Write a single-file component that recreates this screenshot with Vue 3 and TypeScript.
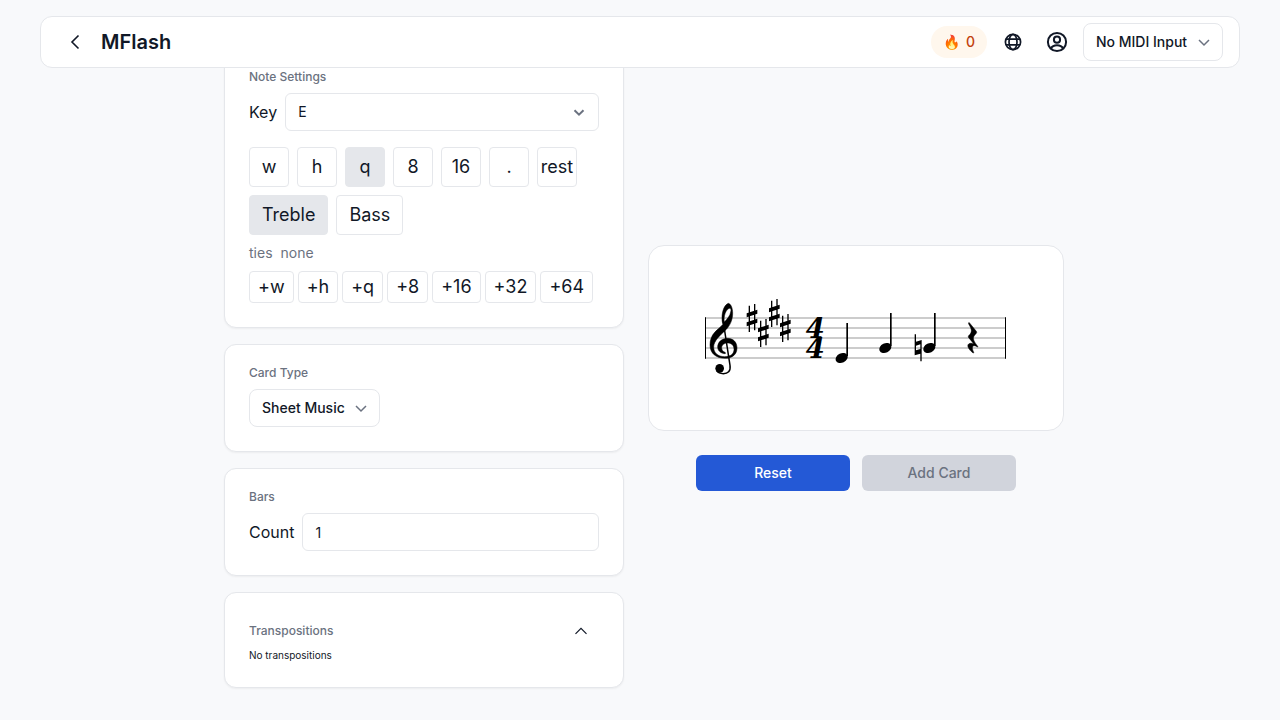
<script setup lang="ts">
import { ref } from 'vue'

const durations = ['w', 'h', 'q', '8', '16', '.', 'rest']
const clefs = ['Treble', 'Bass']
const ties = ['+w', '+h', '+q', '+8', '+16', '+32', '+64']

const duration = ref('q')
const clef = ref('Treble')
const key = ref('E')
const bars = ref('1')
const open = ref(true)

const staffLines = [84, 114, 144, 174, 204]
const sharps = [
  { x: 156, y: 84 },
  { x: 190, y: 129 },
  { x: 223, y: 69 },
  { x: 256, y: 114 },
]
const notes = [
  { x: 425, y: 204 },
  { x: 556, y: 174 },
  { x: 688, y: 174 },
]
</script>

<template>
  <div class="page">
    <header class="topbar">
      <button class="icon-btn" aria-label="Back">
        <svg width="20" height="20" viewBox="0 0 20 20" class="line"><path d="M13.500 3.500 7 10l6.500 6.500" stroke-width="1.600" /></svg>
      </button>
      <h1>MFlash</h1>
      <div class="actions">
        <span class="streak"><span>🔥</span><span>0</span></span>
        <button class="icon-btn" aria-label="Language">
          <svg width="18" height="18" viewBox="0 0 18 18" class="line globe">
            <circle cx="9" cy="9" r="7.600" />
            <ellipse cx="9" cy="9" rx="4" ry="7.600" />
            <path d="M2 6.200h14M2 11.800h14" />
          </svg>
        </button>
        <button class="icon-btn" aria-label="Account">
          <svg width="22" height="22" viewBox="0 0 22 22" class="line person">
            <circle cx="11" cy="11" r="9.100" />
            <circle cx="11" cy="8.700" r="3.100" />
            <path d="M5 17.500c1.200-2.500 3.400-3.200 6-3.200s4.800.7 6 3.200" />
          </svg>
        </button>
        <span class="picker">
          <select aria-label="MIDI input"><option>No MIDI Input</option></select>
          <svg class="chevron" width="16" height="16" viewBox="0 0 16 16"><path d="m3 6 5 5 5-5" /></svg>
        </span>
      </div>
    </header>

    <main class="content">
      <div class="settings">
        <section class="card">
          <h2>Note Settings</h2>
          <div class="field">
            <label for="key">Key</label>
            <span class="picker wide">
              <select id="key" v-model="key"><option>E</option></select>
              <svg class="chevron" width="16" height="16" viewBox="0 0 16 16"><path d="m3.500 6.200 4.500 4.500 4.500-4.500" /></svg>
            </span>
          </div>
          <div class="row first">
            <button v-for="d in durations" :key="d" class="tile" :class="{ on: d === duration }" @click="duration = d">{{ d }}</button>
          </div>
          <div class="row">
            <button v-for="c in clefs" :key="c" class="tile text" :class="{ on: c === clef }" @click="clef = c">{{ c }}</button>
          </div>
          <p class="ties"><span>ties</span><span>none</span></p>
          <div class="row tight">
            <button v-for="t in ties" :key="t" class="tile small">{{ t }}</button>
          </div>
        </section>

        <section class="card">
          <h2>Card Type</h2>
          <span class="picker">
            <select aria-label="Card type"><option>Sheet Music</option></select>
            <svg class="chevron" width="16" height="16" viewBox="0 0 16 16"><path d="m3 6 5 5 5-5" /></svg>
          </span>
        </section>

        <section class="card">
          <h2>Bars</h2>
          <div class="field">
            <label for="bars">Count</label>
            <input id="bars" v-model="bars" type="text" inputmode="numeric" />
          </div>
        </section>

        <section class="card">
          <div class="fold">
            <h2>Transpositions</h2>
            <button class="icon-btn" aria-label="Toggle transpositions" @click="open = !open">
              <svg width="16" height="16" viewBox="0 0 16 16" class="line"><path d="m2.500 10.800 5.500-5.500 5.500 5.500" stroke-width="1.200" /></svg>
            </button>
          </div>
          <p v-if="open" class="empty">No transpositions</p>
        </section>
      </div>

      <div class="preview">
        <div class="sheet">
          <svg width="312" height="96" viewBox="0 0 936 288" role="img" aria-label="Staff">
            <path v-for="y in staffLines" :key="y" :d="`M15 ${y}H918`" stroke="#999" stroke-width="3" />
            <path d="M15 82h3v124h-3zM915 82h3v124h-3z" />

            <path
              fill-rule="evenodd"
              stroke="#000"
              stroke-width="1.500"
              d="M85 40C74 44 66 62 66 84C66 92 67 98 69 103C62 111 52 118 44 127C34 138 30 151 30 165C30 190 48 205 76 205C98 205 111 192 111 174C111 157 100 145 83 145C65 145 53 157 53 171C53 182 62 190 75 191C77 191 77 188 75 187C68 184 65 179 65 173C65 165 73 159 83 159C94 159 102 166 102 178C102 192 92 200 74 200C53 200 41 188 41 171C41 153 60 136 78 119C91 106 98 88 98 70C98 54 93 42 85 40ZM88 55C93 55 94 60 92 66C90 77 83 86 73 96C70 78 78 58 88 55Z"
            />
            <path d="M69 90 90 226C93 244 83 251 70 251C61 251 54 248 50 242" fill="none" stroke="#000" stroke-width="4.500" />
            <circle cx="59" cy="235" r="13" />

            <g v-for="s in sharps" :key="s.x" :transform="`translate(${s.x} ${s.y})`">
              <path d="M-10-37h4v79h-4zM6-42h4v79h-4zM-16-14 16-25v12L-16-2zM-16 13 16 2v12L-16 25z" />
            </g>

            <g class="meter">
              <text x="346" y="144">4</text>
              <text x="346" y="204">4</text>
            </g>

            <g v-for="n in notes" :key="n.x" :transform="`translate(${n.x} ${n.y})`">
              <ellipse rx="19" ry="14" transform="rotate(-25)" />
              <path d="M14-105h5v99h-5z" />
            </g>

            <path d="M644 133h4v22l17-5v64h-4v-23l-17 5zM648 167v14l13-4v-14z" fill-rule="evenodd" />

            <path
              transform="translate(600 30)"
              d="M208 68L229 94C231 97 230 99 228 101C217 112 217 118 233 139C234 141 233 142 231 140C220 133 212 138 221 157C222 159 220 160 218 158C203 146 198 132 211 130C215 129 219 130 221 131L206 113C204 110 205 108 207 106C217 97 216 88 206 72C205 69 206 67 208 68Z"
              stroke="#000"
              stroke-width="1.500"
            />
          </svg>
        </div>
        <div class="buttons">
          <button class="cta">Reset</button>
          <button class="cta" disabled>Add Card</button>
        </div>
      </div>
    </main>
  </div>
</template>

<style>
body {
  background: #f8f9fb;
}
</style>

<style scoped>
.page {
  min-height: 100vh;
  box-sizing: border-box;
  padding: 16px 40px 32px;
  color: #111827;
  font-family: Inter, 'Liberation Sans', sans-serif;
  font-size: 16px;
  line-height: 24px;
}
.page *,
.page *::before {
  box-sizing: border-box;
}
h1,
h2,
p {
  margin: 0;
}
button,
select,
input {
  margin: 0;
  font-family: inherit;
  color: inherit;
}
button {
  cursor: pointer;
}
.line {
  fill: none;
  stroke: currentColor;
  stroke-width: 1.5;
}
.line.globe {
  stroke-width: 1.7;
}
.line.person {
  stroke-width: 2;
}
.meter {
  font-family: 'DejaVu Serif', serif;
  font-size: 82px;
  font-style: italic;
  font-weight: 700;
  text-anchor: middle;
}
.topbar {
  position: sticky;
  top: 16px;
  z-index: 1;
  display: flex;
  align-items: center;
  gap: 8px;
  height: 52px;
  padding: 0 16px;
  background: #fff;
  border: 1px solid #e5e7eb;
  border-radius: 12px;
}
h1 {
  font-size: 20px;
  font-weight: 600;
  line-height: 28px;
}
.actions {
  display: flex;
  align-items: center;
  gap: 8px;
  margin-left: auto;
}
.icon-btn {
  display: flex;
  align-items: center;
  justify-content: center;
  width: 36px;
  height: 36px;
  padding: 0;
  border: 0;
  background: none;
}
.streak {
  display: flex;
  align-items: center;
  gap: 6px;
  height: 32px;
  padding: 0 12px;
  border-radius: 16px;
  background: #fff7ed;
  color: #c2410c;
  font-size: 14px;
  font-weight: 500;
}
.picker {
  position: relative;
  display: inline-flex;
}
.picker select {
  height: 38px;
  padding: 0 34px 2px 12px;
  appearance: none;
  border: 1px solid #e5e7eb;
  border-radius: 8px;
  background: #fff;
  font-size: 14px;
  font-weight: 500;
}
.picker.wide {
  display: flex;
  flex: 1;
}
.picker.wide select {
  width: 100%;
  border-radius: 6px;
  font-weight: 400;
}
.chevron {
  position: absolute;
  top: 11px;
  right: 11px;
  fill: none;
  stroke: #6b7280;
  stroke-width: 1.5;
  pointer-events: none;
}
.wide .chevron {
  right: 12px;
  stroke-width: 2;
}
.content {
  display: grid;
  grid-template-columns: 400px 416px;
  justify-content: center;
  align-items: center;
  gap: 24px;
  margin-top: -20px;
  padding-left: 8px;
}
.settings {
  display: flex;
  flex-direction: column;
  gap: 16px;
}
.card {
  padding: 20px 24px 24px;
  background: #fff;
  border: 1px solid #e5e7eb;
  border-radius: 12px;
  box-shadow: 0 1px 2px rgba(0, 0, 0, 0.05);
}
h2 {
  margin-bottom: 8px;
  color: #6b7280;
  font-size: 12px;
  font-weight: 500;
  line-height: 16px;
}
.card > .picker {
  display: flex;
  width: fit-content;
}
.field {
  display: flex;
  align-items: center;
  gap: 8px;
}
.field input {
  flex: 1;
  min-width: 0;
  height: 38px;
  padding: 0 12px;
  border: 1px solid #e5e7eb;
  border-radius: 6px;
  background: #fff;
  font-size: 14px;
}
.row {
  display: flex;
  gap: 8px;
  margin-top: 8px;
}
.row.first {
  margin-top: 16px;
}
.row.tight {
  gap: 4px;
}
.tile {
  display: flex;
  align-items: center;
  justify-content: center;
  width: 40px;
  height: 40px;
  padding: 0;
  border: 1px solid #e5e7eb;
  border-radius: 4px;
  background: #fff;
  font-size: 18px;
  line-height: 28px;
}
.tile.on {
  background: #e5e7eb;
}
.tile.text {
  width: auto;
  padding: 0 12px;
}
.tile.small {
  width: auto;
  height: 32px;
  padding: 0 8px;
}
.ties {
  display: flex;
  gap: 8px;
  margin-top: 8px;
  color: #6b7280;
  font-size: 14px;
  line-height: 20px;
}
.fold {
  display: flex;
  align-items: center;
  justify-content: space-between;
  height: 36px;
}
.fold h2 {
  margin: 0;
}
.empty {
  margin-bottom: 2px;
  font-size: 10px;
  line-height: 12px;
}
.sheet {
  display: flex;
  justify-content: center;
  padding: 44px 24px;
  background: #fff;
  border: 1px solid #e5e7eb;
  border-radius: 16px;
}
.buttons {
  display: grid;
  grid-template-columns: 1fr 1fr;
  gap: 12px;
  margin: 24px 48px 0;
}
.cta {
  height: 36px;
  padding: 0 16px;
  border: 0;
  border-radius: 6px;
  background: #2459d6;
  color: #fff;
  font-size: 14px;
  font-weight: 500;
  line-height: 20px;
}
.cta:disabled {
  background: #d1d4dc;
  color: #6b7280;
  cursor: default;
}
</style>
